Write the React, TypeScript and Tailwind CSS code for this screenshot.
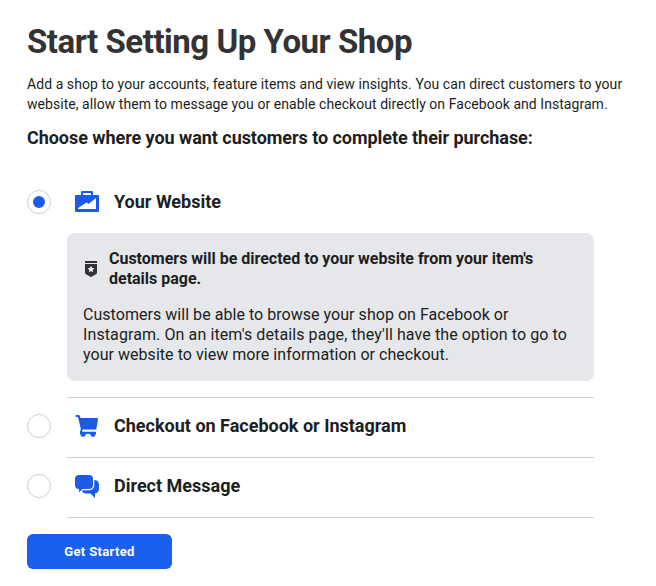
import { useState } from "react";
import type { ReactNode } from "react";

const BriefcaseIcon = () => (
  <svg className="h-6 w-6" viewBox="0 0 24 24" fill="none">
    <path d="M7 6V2h10v4" stroke="#1b5be8" strokeWidth={2} strokeLinejoin="round" />
    <path d="M1 5h22a1 1 0 0 1 1 1v15a1 1 0 0 1-1 1H1a1 1 0 0 1-1-1V6a1 1 0 0 1 1-1z" fill="#1b5be8" />
    <path d="M3 19v-1l8.500-5.500L13.500 14 21 8v11z" fill="#fff" />
  </svg>
);

const CartIcon = () => (
  <svg className="h-6 w-6" viewBox="0 0 24 24" fill="#1b5be8">
    <path d="M1.500 1h2c.7 0 1.200.4 1.400 1l.6 2H22c.7 0 1.100.5 1 1.100l-1.500 9.100c-.1.800-.7 1.300-1.500 1.300H7.500L7 17.700h13c.6 0 1 .4 1 1v1.300H5v-2.500l.9-2.300L3 3H1.500a1 1 0 0 1 0-2z" />
    <circle cx="8" cy="20.300" r="2.500" />
    <circle cx="18" cy="20.300" r="2.500" />
  </svg>
);

const ChatIcon = () => (
  <svg className="h-6 w-6" viewBox="0 0 24 24" fill="#1b5be8">
    <path d="M4 1h10a4 4 0 0 1 4 4v6a4 4 0 0 1-4 4H7.500L4 18.500V15a4 4 0 0 1-4-4V5a4 4 0 0 1 4-4z" />
    <path d="M19.300 6C22 6 24 8 24 10.500V15c0 2.500-1.500 4-4 4.500V24l-4.500-4.500H11c-2 0-3.500-1-4-2.500l1-.8h6.300a5 5 0 0 0 5-5z" />
  </svg>
);

const BadgeIcon = () => (
  <svg className="h-4 w-4" viewBox="0 0 16 16" fill="#303236">
    <path d="M2 0h12v2H2zM2 3h12v8.500a2 2 0 0 1-1 1.700L8 16l-5-2.800a2 2 0 0 1-1-1.700z" />
    <path d="M8 4.800l1 2.200 2.400.3-1.800 1.600.5 2.400L8 10.100l-2.100 1.200.5-2.400-1.800-1.600L7 7z" fill="#fff" />
  </svg>
);

interface OptionProps {
  label: string;
  icon: ReactNode;
  selected: boolean;
  onSelect: () => void;
}

function Option({ label, icon, selected, onSelect }: OptionProps) {
  return (
    <button type="button" role="radio" aria-checked={selected} onClick={onSelect} className="flex w-full items-center text-left">
      <span className="flex h-6 w-6 items-center justify-center rounded-full border border-[#ccced1] bg-white">
        {selected && <span className="h-3 w-3 rounded-full bg-[#1b5be8]" />}
      </span>
      <span className="ml-6 flex h-6 w-6">{icon}</span>
      <span className="ml-[15px] text-[18px] leading-6 font-bold">{label}</span>
    </button>
  );
}

export default function App() {
  const [selected, setSelected] = useState("website");

  return (
    <main className="min-h-[586px] bg-white pt-[22px] pl-[27px] font-[Roboto,sans-serif] text-[#1c1e21]">
      <h1 className="text-[33px] leading-10 font-bold tracking-[-0.48px] text-[#333333]">Start Setting Up Your Shop</h1>
      <p className="mt-3 text-[14px] leading-5 tracking-[0.065px] whitespace-nowrap">
        Add a shop to your accounts, feature items and view insights. You can direct customers to your
        <br />
        <span className="tracking-[0.05px]">website, allow them to message you or enable checkout directly on Facebook and Instagram.</span>
      </p>
      <h2 className="mt-3 text-[18px] leading-6 font-bold tracking-[-0.05px]">Choose where you want customers to complete their purchase:</h2>

      <div role="radiogroup" className="mt-10 w-[567px]">
        <Option label="Your Website" icon={<BriefcaseIcon />} selected={selected === "website"} onSelect={() => setSelected("website")} />
        <section className="mt-[19px] ml-10 h-[148px] rounded-lg bg-[#e6e7eb] px-4 pt-4 text-[16px] leading-5">
          <div className="flex items-center gap-[10px]">
            <BadgeIcon />
            <h3 className="font-bold tracking-[-0.01px] whitespace-nowrap">
              Customers will be directed to your website from your item's
              <br />
              details page.
            </h3>
          </div>
          <p className="mt-4 tracking-[0.04px] whitespace-nowrap">
            Customers will be able to browse your shop on Facebook or
            <br />
            <span className="tracking-[0.1px]">Instagram. On an item's details page, they'll have the option to go to</span>
            <br />
            your website to view more information or checkout.
          </p>
        </section>
        <hr className="mt-4 ml-10 border-[#cfd0d2]" />
        <div className="pt-4">
          <Option label="Checkout on Facebook or Instagram" icon={<CartIcon />} selected={selected === "checkout"} onSelect={() => setSelected("checkout")} />
        </div>
        <hr className="mt-[19px] ml-10 border-[#cfd0d2]" />
        <div className="pt-4">
          <Option label="Direct Message" icon={<ChatIcon />} selected={selected === "message"} onSelect={() => setSelected("message")} />
        </div>
        <hr className="mt-[19px] ml-10 border-[#cfd0d2]" />
      </div>

      <button type="button" className="mt-4 h-[35px] w-[145px] rounded-md bg-[#1b5fee] text-[13px] font-bold tracking-[0.35px] text-white">
        Get Started
      </button>
    </main>
  );
}
